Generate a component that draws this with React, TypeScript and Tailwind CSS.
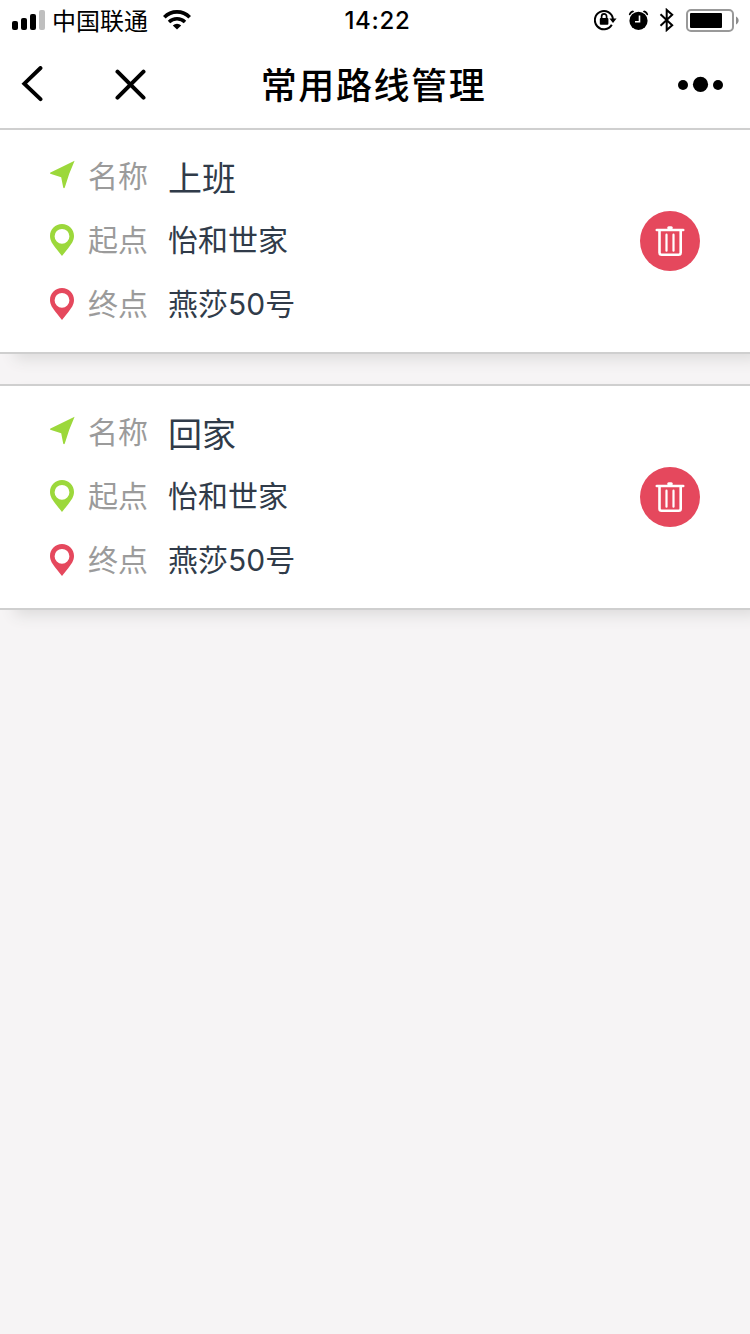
interface Route {
  id: number;
  name: string;
  start: string;
  end: string;
}

const routes: Route[] = [
  { id: 1, name: "上班", start: "怡和世家", end: "燕莎50号" },
  { id: 2, name: "回家", start: "怡和世家", end: "燕莎50号" },
];

function StatusBar() {
  return (
    <div className="grid h-10 grid-cols-[1fr_auto_1fr] items-center pl-3 pr-2.5">
      <div className="flex items-center">
        <svg width="34" height="22" viewBox="0 0 34 22">
          <rect x="0" y="12" width="6" height="9" rx="2" />
          <rect x="9" y="9" width="6" height="12" rx="2" />
          <rect x="18" y="5" width="6" height="16" rx="2" />
          <rect x="27" y="1" width="6" height="20" rx="2" fill="#bfbfbf" />
        </svg>
        <span className="ml-1.5 pt-1 text-2xl leading-9">中国联通</span>
        <svg className="ml-[15px]" width="28" height="20" viewBox="0 0 28 20" fill="none" stroke="#000">
          <path d="M1.3 7.2a18 18 0 0 1 25.4 0" strokeWidth="3.7" />
          <path d="M6 12a11.5 11.5 0 0 1 16 0" strokeWidth="3.5" />
          <path d="M14 19.5l-4.2-4.1a6.2 6.2 0 0 1 8.4 0z" fill="#000" stroke="none" />
        </svg>
      </div>
      <span className="pl-[3px] pt-0.5 text-2xl font-medium leading-[38px] tracking-[0.7px]">14:22</span>
      <div className="flex items-center justify-end">
        {/* rotation lock */}
        <svg width="23" height="22" viewBox="0 0 23 22">
          <path
            d="M17.8 15.8A9.1 9.1 0 1 1 19 10"
            fill="none"
            stroke="#000"
            strokeWidth="2"
          />
          <path d="M15.4 9.5h7.2l-3.6 4.6z" />
          <rect x="5.8" y="9" width="8.6" height="6.8" rx="1" />
          <path d="M7.6 10V7.4a2.5 2.5 0 0 1 5 0V10" fill="none" stroke="#000" strokeWidth="1.7" />
        </svg>
        {/* alarm */}
        <svg className="ml-[11px]" width="21" height="20" viewBox="0 0 21 20">
          <circle cx="10.5" cy="10.8" r="9.1" />
          <path d="M.8 5Q1.3 1.2 5 .5L6.200 1.800Q3.500 2.800 2 5.200zM20.200 5Q19.700 1.200 16 .5L14.800 1.800Q17.500 2.800 19 5.200z" />
          <path d="M11.500 5.500v6.300H7" fill="none" stroke="#fff" strokeWidth="1.600" />
        </svg>
        {/* bluetooth */}
        <svg className="ml-[10px]" width="16" height="24" viewBox="0 0 16 24">
          <path
            d="M1.500 6.300l11.700 10.900-5.500 4.900V1.900l5.500 4.900L1.500 17.700"
            fill="none"
            stroke="#000"
            strokeWidth="2"
          />
        </svg>
        <svg className="ml-[11px] mt-px" width="54" height="24" viewBox="0 0 54 24">
          <rect x="1" y="1" width="46" height="21" rx="4" fill="none" stroke="#999" strokeWidth="2" />
          <rect x="4" y="4" width="32" height="15" rx="1" />
          <path d="M50 7.500c3.500 1.500 3.500 6.500 0 8z" fill="#8c8c8c" />
        </svg>
      </div>
    </div>
  );
}

function NavBar() {
  return (
    <div className="grid h-[88px] grid-cols-[1fr_auto_1fr] items-center px-5">
      <div className="flex items-center">
        <svg width="24" height="36" viewBox="0 0 24 36" fill="none" stroke="#000" strokeWidth="3.9" strokeLinecap="round">
          <path d="M20.500 2L4.300 17.700l16.200 15.500" strokeLinejoin="miter" />
        </svg>
        <svg className="ml-[70px]" width="32" height="32" viewBox="0 0 32 32" stroke="#000" strokeWidth="4" strokeLinecap="round">
          <path d="M3.500 3.700l26 26M29.500 3.700l-26 26" />
        </svg>
      </div>
      <h1 className="pr-[3px] pt-1 text-[36px] font-medium leading-[84px] tracking-[1.6px]">常用路线管理</h1>
      <svg className="mr-[6px] justify-self-end" width="46" height="16" viewBox="0 0 46 16">
        <circle cx="5" cy="9" r="5" />
        <circle cx="22.500" cy="8.400" r="7.600" />
        <circle cx="40" cy="9" r="5" />
      </svg>
    </div>
  );
}

function ArrowIcon() {
  return (
    <svg width="26" height="32" viewBox="0 0 26 32" fill="#9cd83b">
      <path d="M24.600.7Q18.500 14 14.800 27.500 14 28.800 13.200 27.500L11.200 17.200.3 13.800Q-.3 13 .5 12.400z" />
    </svg>
  );
}

function PinIcon({ color }: { color: string }) {
  return (
    <svg width="26" height="32" viewBox="0 0 26 32">
      <path
        fill={color}
        fillRule="evenodd"
        d="M12 0C5.300 0 0 5.400 0 12c0 5 3 8.500 6 12.500 2.300 3 4.200 5 6 7.500 1.800-2.500 3.700-4.500 6-7.500 3-4 6-7.500 6-12.500C24 5.400 18.700 0 12 0zm0 4.900a7.400 7.400 0 1 1 0 14.800A7.400 7.400 0 0 1 12 4.900z"
      />
    </svg>
  );
}

function DeleteButton() {
  return (
    <button className="flex size-[60px] items-center justify-center rounded-full bg-[#e5485d]" aria-label="删除">
      <svg width="30" height="32" viewBox="0 0 30 32" fill="none" stroke="#fff" strokeLinecap="round" strokeLinejoin="round">
        <path d="M1.800 5h26.400" strokeWidth="2.600" />
        <path d="M13.700 2.700h2.600" strokeWidth="3" />
        <path d="M4.500 5.500v22.300a2 2 0 0 0 2 2h17.200a2 2 0 0 0 2-2V5.500" strokeWidth="2.600" />
        <path d="M11.500 9.700v16M18.500 9.700v16" strokeWidth="2.200" />
      </svg>
    </button>
  );
}

function RouteCard({ route }: { route: Route }) {
  return (
    <div className="flex h-[226px] items-center justify-between border-y-2 border-[#cfcfcf] bg-white px-[50px] shadow-[12px_8px_14px_-3px_#dcdbdb]">
      <div className="pb-0.5 text-[30px] leading-[60px] text-[#303b49]">
        <div className="flex h-16 items-center">
          <ArrowIcon />
          <span className="ml-3 w-20 text-[#9b9b9b]">名称</span>
          <span className="pt-1.5 text-[34px]">{route.name}</span>
        </div>
        <div className="flex h-16 items-center">
          <PinIcon color="#9cd83b" />
          <span className="ml-3 w-20 text-[#9b9b9b]">起点</span>
          <span>{route.start}</span>
        </div>
        <div className="flex h-16 items-center">
          <PinIcon color="#e5485d" />
          <span className="ml-3 w-20 text-[#9b9b9b]">终点</span>
          <span>{route.end}</span>
        </div>
      </div>
      <DeleteButton />
    </div>
  );
}

export default function App() {
  return (
    <div className="h-[1334px] w-[750px] overflow-hidden bg-[#f6f4f5] font-[Inter,'Noto_Sans_CJK_SC',sans-serif] text-black">
      <header className="bg-white">
        <StatusBar />
        <NavBar />
      </header>
      <main className="flex flex-col gap-[30px]">
        {routes.map((route) => (
          <RouteCard key={route.id} route={route} />
        ))}
      </main>
    </div>
  );
}
